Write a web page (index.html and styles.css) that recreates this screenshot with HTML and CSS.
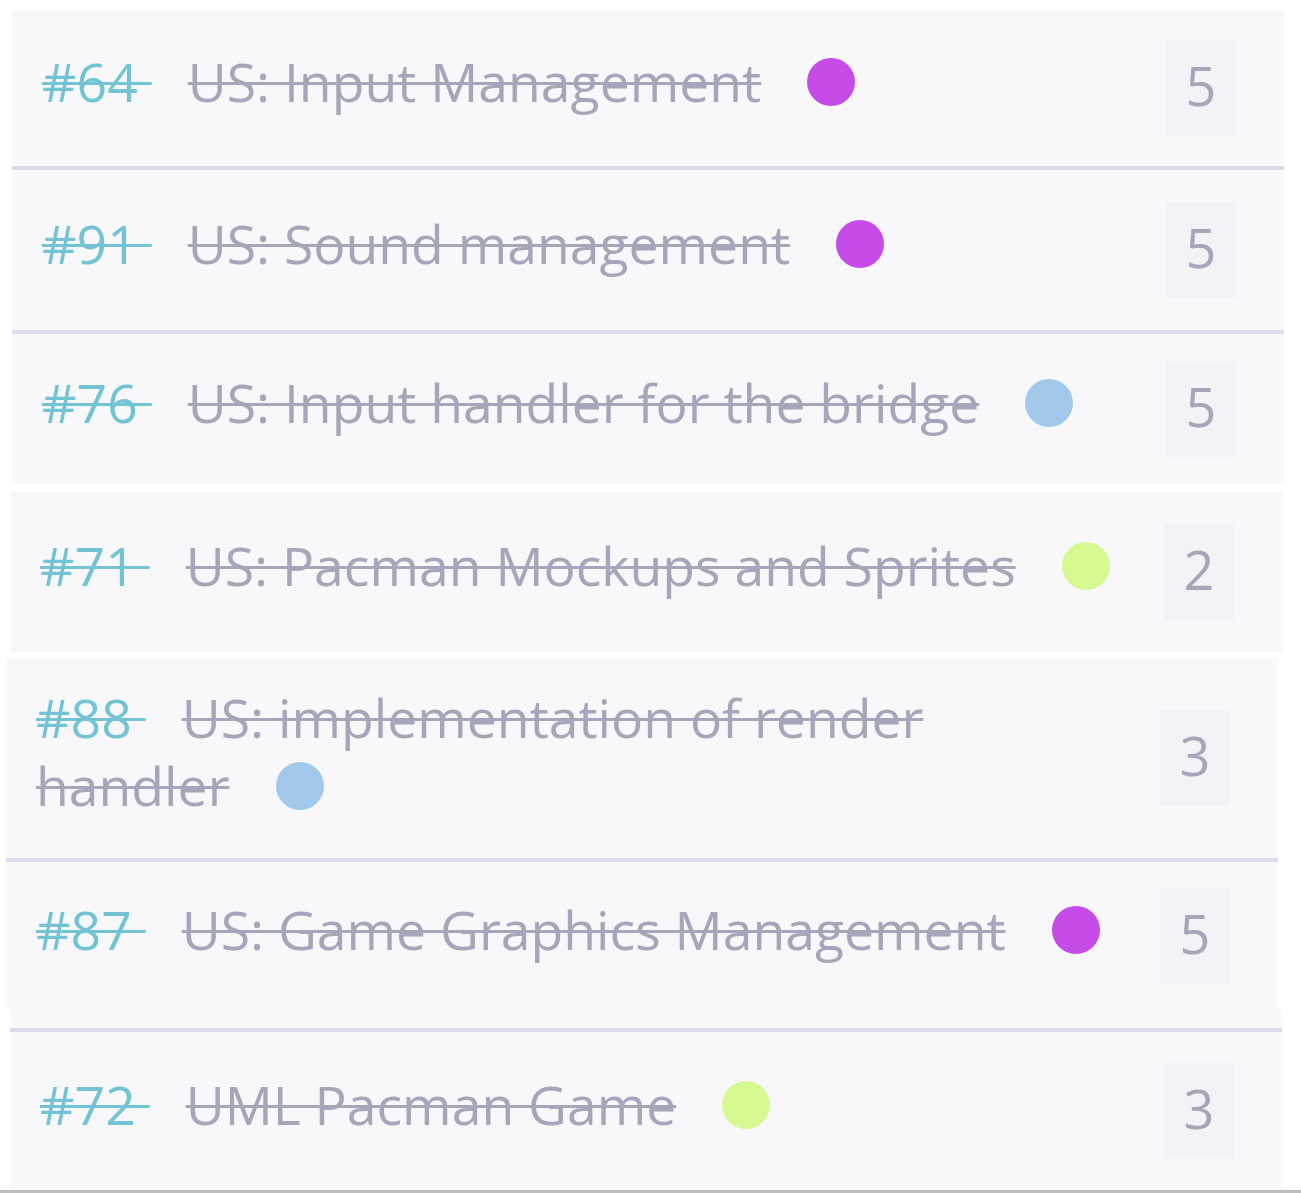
FILE: index.html
```html
<!DOCTYPE html>
<html lang="en">
<head>
<meta charset="utf-8">
<title>User stories</title>
<link rel="stylesheet" href="styles.css">
</head>
<body>
<div class="board">
  <div class="card card-1 bordered">
    <div class="story"><span class="ref">#64 </span><span class="name">US: Input Management</span><span class="dot dot-purple"></span></div>
    <div class="points">5</div>
  </div>
  <div class="card card-2 bordered">
    <div class="story"><span class="ref">#91 </span><span class="name">US: Sound management</span><span class="dot dot-purple"></span></div>
    <div class="points">5</div>
  </div>
  <div class="card card-3">
    <div class="story"><span class="ref">#76 </span><span class="name">US: Input handler for the bridge</span><span class="dot dot-blue"></span></div>
    <div class="points">5</div>
  </div>
  <div class="card card-4">
    <div class="story"><span class="ref">#71 </span><span class="name">US: Pacman Mockups and Sprites</span><span class="dot dot-green"></span></div>
    <div class="points">2</div>
  </div>
  <div class="card card-5 bordered">
    <div class="story"><span class="ref">#88 </span><span class="name">US: implementation of render handler</span><span class="dot dot-blue"></span></div>
    <div class="points">3</div>
  </div>
  <div class="card card-6">
    <div class="story"><span class="ref">#87 </span><span class="name">US: Game Graphics Management</span><span class="dot dot-purple"></span></div>
    <div class="points">5</div>
  </div>
  <div class="card card-7">
    <div class="card-inner">
      <div class="story"><span class="ref">#72 </span><span class="name">UML Pacman Game</span><span class="dot dot-green"></span></div>
      <div class="points">3</div>
    </div>
  </div>
</div>
<div class="bottom-rule"></div>
</body>
</html>
```

FILE: styles.css
```css
* { box-sizing: border-box; }

html, body {
  margin: 0;
  padding: 0;
  background: #ffffff;
}

body {
  font-family: "Open Sans", "Noto Sans", sans-serif;
  width: 1301px;
  height: 1193px;
  overflow: hidden;
  display: flex;
  flex-direction: column;
}

.board {
  padding-top: 10px;
  display: flex;
  flex-direction: column;
  flex: 1;
}

.card {
  display: flex;
  align-items: center;
  background: #f8f8fb;
  padding-left: 30px;
  padding-right: 48px;
  width: 1272px;
}

.bordered {
  border-bottom: 4px solid #dcdcee;
}

.card-1 { margin-left: 12px; height: 160px; }
.card-2 { margin-left: 12px; height: 164px; }
.card-3 { margin-left: 12px; height: 150px; margin-bottom: 8px; }
.card-4 { margin-left: 10px; height: 160px; margin-bottom: 6px; }
.card-5 { margin-left: 6px; height: 204px; }
.card-6 { margin-left: 6px; height: 148px; }
.card-7 {
  margin-left: 10px;
  height: 180px;
  padding: 18px 0 0 0;
  align-items: stretch;
}

.card-inner {
  flex: 1;
  display: flex;
  align-items: center;
  border-top: 4px solid #dcdcee;
  padding-left: 30px;
  padding-right: 48px;
}

.story {
  flex: 1;
  font-size: 53.5px;
  line-height: 68px;
  color: #a6a6ba;
  padding-right: 40px;
  padding-bottom: 12px;
}

.ref {
  color: #72c4d4;
  text-decoration: line-through;
  text-decoration-thickness: 3px;
  margin-right: 36px;
}

.name {
  text-decoration: line-through;
  text-decoration-thickness: 3px;
}

.dot {
  display: inline-block;
  width: 48px;
  height: 48px;
  border-radius: 50%;
  margin-left: 46px;
  vertical-align: -4px;
}

.dot-purple { background: #c64ce9; }
.dot-blue { background: #a2c8ec; }
.dot-green { background: #d6f992; }

.points {
  flex: none;
  width: 70px;
  height: 96px;
  background: #f2f2f7;
  color: #a6a6ba;
  font-size: 54px;
  padding-bottom: 7px;
  display: flex;
  align-items: center;
  justify-content: center;
}

.bottom-rule {
  height: 3px;
  background: #bdbdbd;
  flex: none;
}
```
